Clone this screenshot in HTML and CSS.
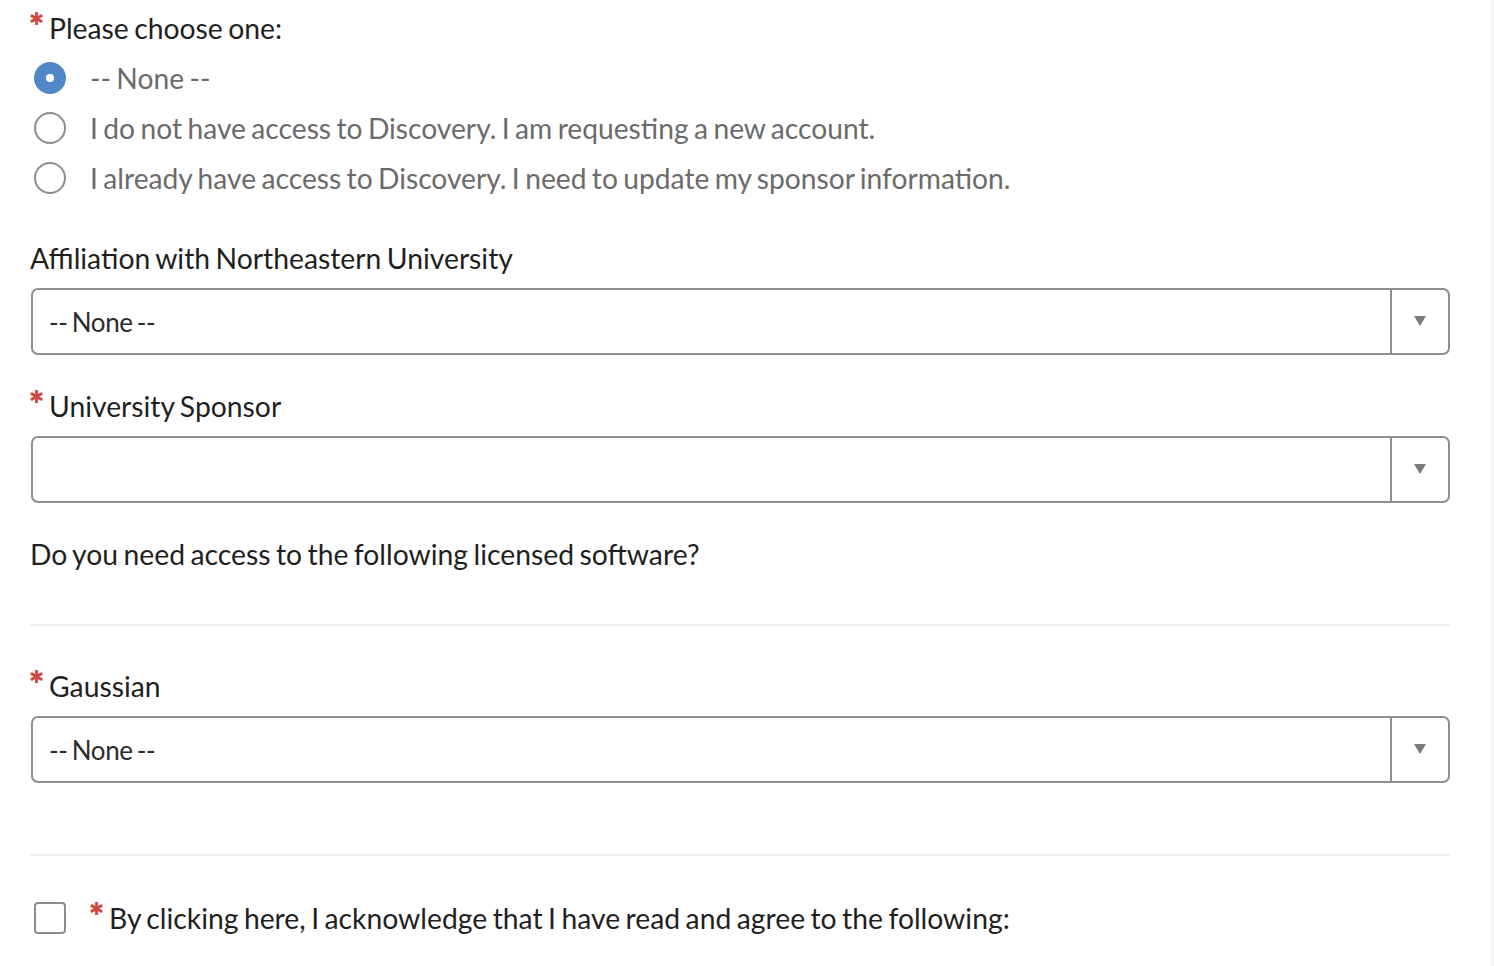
FILE: index.html
```html
<!DOCTYPE html>
<html>
<head>
<meta charset="utf-8">
<link rel="stylesheet" href="styles.css">
</head>
<body>
<div class="page">
  <form class="form">
    <div class="field">
      <div class="label"><span class="req">✱</span>Please choose one:</div>
      <div class="radios">
        <label class="radio-row"><span class="radio checked"></span><span class="radio-text">-- None --</span></label>
        <label class="radio-row"><span class="radio"></span><span class="radio-text">I do not have access to Discovery. I am requesting a new account.</span></label>
        <label class="radio-row"><span class="radio"></span><span class="radio-text">I already have access to Discovery. I need to update my sponsor information.</span></label>
      </div>
    </div>

    <div class="field f-aff">
      <div class="label">Affiliation with Northeastern University</div>
      <div class="select"><span class="select-value">-- None --</span><span class="select-btn"><span class="tri"></span></span></div>
    </div>

    <div class="field f-spon">
      <div class="label"><span class="req">✱</span>University Sponsor</div>
      <div class="select"><span class="select-value"></span><span class="select-btn"><span class="tri"></span></span></div>
    </div>

    <div class="field f-q">
      <div class="label">Do you need access to the following licensed software?</div>
    </div>
    <hr class="divider d1">

    <div class="field f-gau">
      <div class="label"><span class="req">✱</span>Gaussian</div>
      <div class="select"><span class="select-value">-- None --</span><span class="select-btn"><span class="tri"></span></span></div>
    </div>
    <hr class="divider d2">

    <div class="check-row">
      <span class="checkbox"></span>
      <span class="label check-label"><span class="req">✱</span>By clicking here, I acknowledge that I have read and agree to the following:</span>
    </div>
  </form>
  <div class="rail"></div>
</div>
</body>
</html>
```

FILE: styles.css
```css
html, body {
  margin: 0;
  padding: 0;
  background: #ffffff;
}
body {
  font-family: Lato, "Open Sans", sans-serif;
  color: #222222;
  width: 1494px;
  height: 966px;
  overflow: hidden;
}
.page {
  display: flex;
  height: 966px;
}
.form {
  width: 1420px;
  margin-left: 30px;
  flex: none;
}
.rail {
  margin-left: 40px;
  width: 4px;
  background: #f7f7f7;
  flex: none;
}
.label {
  font-size: 28.3px;
  word-spacing: -1.8px;
  line-height: 34px;
  height: 34px;
  color: #1f1f1f;
  display: flex;
  align-items: flex-start;
}
.req {
  color: #cc4b42;
  font-family: "DejaVu Sans", sans-serif;
  font-size: 18px;
  line-height: 18px;
  height: 18px;
  width: 19px;
  flex: none;
  margin-top: -1px;
  margin-left: -1px;
  margin-right: 1px;
  word-spacing: 0;
}
.field:first-child {
  padding-top: 11px;
}
.radios {
  display: flex;
  flex-direction: column;
  margin-top: 8px;
}
.radio-row {
  display: flex;
  align-items: center;
  height: 50px;
}
.radio {
  box-sizing: border-box;
  width: 32px;
  height: 32px;
  border-radius: 50%;
  border: 2px solid #8c8c8c;
  margin-left: 4px;
  margin-right: 24px;
  flex: none;
  background: #fff;
}
.radio.checked {
  border: 12px solid #5087c7;
  background: #ffffff;
}
.radio-text {
  font-size: 28.2px;
  word-spacing: -1.8px;
  color: #6b6b6b;
}
.f-aff { margin-top: 38px; }
.f-spon { margin-top: 34px; }
.f-q { margin-top: 34px; }
.f-gau { margin-top: 43px; }
.select {
  box-sizing: border-box;
  margin-top: 13px;
  height: 67px;
  border: 2px solid #8e8e8e;
  border-radius: 7px;
  display: flex;
  align-items: center;
  margin-left: 1px;
  width: 1419px;
}
.select-value {
  flex: 1;
  padding-left: 16px;
  font-size: 26px;
  word-spacing: -2px;
  letter-spacing: -0.4px;
  color: #2b2b2b;
}
.select-btn {
  width: 58px;
  height: 100%;
  border-left: 2px solid #8e8e8e;
  display: flex;
  align-items: center;
  justify-content: center;
  padding-bottom: 2px;
  box-sizing: border-box;
}
.tri {
  width: 0;
  height: 0;
  border-left: 6.5px solid transparent;
  border-right: 6.5px solid transparent;
  border-top: 10px solid #7a7a7a;
}
.divider {
  border: 0;
  height: 2px;
  background: #efefef;
  margin: 0;
}
.d1 { margin-top: 53px; }
.d2 { margin-top: 71px; }
.check-row {
  margin-top: 45px;
  display: flex;
  align-items: center;
}
.checkbox {
  box-sizing: border-box;
  width: 32px;
  height: 32px;
  border: 2px solid #8c8c8c;
  border-radius: 4px;
  margin-left: 4px;
  margin-right: 24px;
  flex: none;
}
.check-label {
  display: flex;
}
```
